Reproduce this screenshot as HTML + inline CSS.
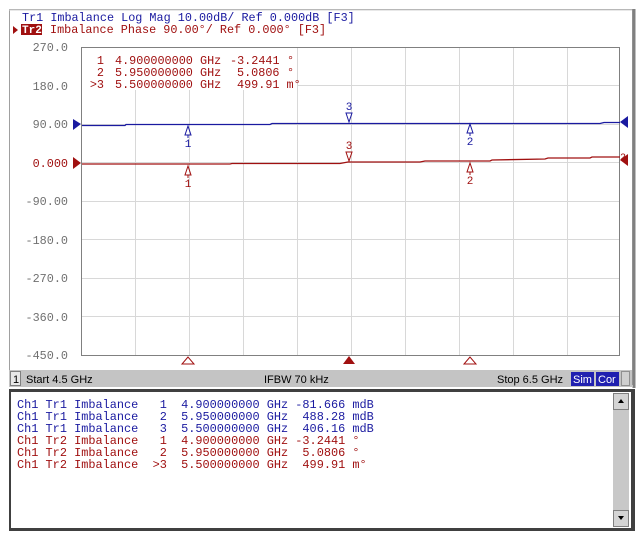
<!DOCTYPE html>
<html><head><meta charset="utf-8"><style>
html,body{margin:0;padding:0;background:#fff;width:644px;height:544px;overflow:hidden}
svg text{font-family:"Liberation Mono",monospace}
</style></head><body>
<svg width="644" height="544" viewBox="0 0 644 544" xmlns="http://www.w3.org/2000/svg">
<rect width="644" height="544" fill="#fff"/>
<rect x="9.5" y="9.5" width="623" height="375" fill="#fff" stroke="#a0a0a0"/>
<line x1="634" y1="9" x2="634" y2="388" stroke="#808080" stroke-width="3"/>
<line x1="9" y1="10" x2="632" y2="10" stroke="#d0d0d0"/>
<text x="22" y="21" font-size="11.8" fill="#1a1aa0">Tr1 Imbalance Log Mag 10.00dB/ Ref 0.000dB [F3]</text>
<polygon points="13,26 18,30 13,34" fill="#a01010"/>
<rect x="21" y="24" width="21" height="11" fill="#a01010"/>
<text x="22" y="33" font-size="11" font-weight="bold" fill="#fff">Tr2</text>
<text x="50" y="33" font-size="11.8" fill="#a01010">Imbalance Phase 90.00°/ Ref 0.000° [F3]</text>
<g stroke="#d8d8d8" stroke-width="1">
<line x1="135.5" y1="47" x2="135.5" y2="355"/><line x1="189.5" y1="47" x2="189.5" y2="355"/>
<line x1="243.5" y1="47" x2="243.5" y2="355"/><line x1="297.5" y1="47" x2="297.5" y2="355"/>
<line x1="351.5" y1="47" x2="351.5" y2="355"/><line x1="405.5" y1="47" x2="405.5" y2="355"/>
<line x1="459.5" y1="47" x2="459.5" y2="355"/><line x1="513.5" y1="47" x2="513.5" y2="355"/>
<line x1="567.5" y1="47" x2="567.5" y2="355"/>
<line x1="81" y1="85.5" x2="620" y2="85.5"/><line x1="81" y1="124.5" x2="620" y2="124.5"/>
<line x1="81" y1="162.5" x2="620" y2="162.5"/><line x1="81" y1="201.5" x2="620" y2="201.5"/>
<line x1="81" y1="239.5" x2="620" y2="239.5"/><line x1="81" y1="278.5" x2="620" y2="278.5"/>
<line x1="81" y1="316.5" x2="620" y2="316.5"/>
</g>
<rect x="81.5" y="47.5" width="538" height="308" fill="none" stroke="#808080"/>
<g font-size="11.8" fill="#707070" text-anchor="end">
<text x="68" y="51">270.0</text><text x="68" y="90">180.0</text>
<text x="68" y="128">90.00</text>
<text x="68" y="167" fill="#a01010">0.000</text>
<text x="68" y="205">-90.00</text><text x="68" y="244">-180.0</text>
<text x="68" y="282">-270.0</text><text x="68" y="321">-360.0</text>
<text x="68" y="359">-450.0</text>
</g>
<rect x="82" y="48" width="215" height="42" fill="#fff"/>
<g font-size="11.8" fill="#a01010">
<text x="104" y="64" text-anchor="end">1</text><text x="115" y="64">4.900000000</text><text x="200" y="64">GHz</text><text x="230" y="64">-3.2441</text><text x="287" y="64">°</text>
<text x="104" y="76" text-anchor="end">2</text><text x="115" y="76">5.950000000</text><text x="200" y="76">GHz</text><text x="237" y="76">5.0806</text><text x="287" y="76">°</text>
<text x="104" y="88" text-anchor="end">&gt;3</text><text x="115" y="88">5.500000000</text><text x="200" y="88">GHz</text><text x="237" y="88">499.91 m°</text>
</g>
<polygon points="73,119 81,124 73,130" fill="#1a1aa0"/>
<polygon points="73,157 81,163 73,169" fill="#a01010"/>
<polygon points="628,116 620,122 628,128" fill="#1a1aa0"/>
<polygon points="628,154 620,160 628,166" fill="#a01010"/>
<text x="620" y="160" font-size="10" fill="#a01010">2</text>
<polyline points="82,125.5 125,125.5 126,124.5 270,124.5 272,123.5 600,123.5 604,122.5 620,122.5" fill="none" stroke="#1a1aa0" stroke-width="1.3"/>
<polyline points="82,164 230,164 232,163.5 340,163.5 348,162 420,162 425,161 490,161 492,160 545,159 548,158 590,158 592,157 620,157" fill="none" stroke="#a01010" stroke-width="1.3"/>
<g fill="none" stroke="#1a1aa0" stroke-width="1">
<polygon points="188,126 185,135 191,135"/><line x1="188" y1="135" x2="188" y2="138"/>
<polygon points="470,124 467,133 473,133"/><line x1="470" y1="133" x2="470" y2="136"/>
<polygon points="349,122 346,113 352,113"/>
</g>
<g fill="#1a1aa0" font-size="11" text-anchor="middle">
<text x="188" y="147">1</text><text x="470" y="145">2</text><text x="349" y="110">3</text>
</g>
<g fill="none" stroke="#a01010" stroke-width="1">
<polygon points="188,166 185,175 191,175"/><line x1="188" y1="175" x2="188" y2="178"/>
<polygon points="470,163 467,172 473,172"/><line x1="470" y1="172" x2="470" y2="175"/>
<polygon points="349,161 346,152 352,152"/>
</g>
<g fill="#a01010" font-size="11" text-anchor="middle">
<text x="188" y="187">1</text><text x="470" y="184">2</text><text x="349" y="149">3</text>
</g>
<polygon points="188,357 182,364 194,364" fill="none" stroke="#a01010"/>
<polygon points="470,357 464,364 476,364" fill="none" stroke="#a01010"/>
<polygon points="349,356 343,364 355,364" fill="#a01010"/>
<rect x="9" y="370" width="623" height="17" fill="#c4c4c4"/>
<rect x="10.5" y="371.5" width="10" height="14" fill="#e8e8e8" stroke="#808080"/>
<g font-size="11" fill="#000">
<text x="13" y="383" style="font-family:'Liberation Sans'">1</text>
<text x="26" y="383" style="font-family:'Liberation Sans'">Start 4.5 GHz</text>
<text x="264" y="383" style="font-family:'Liberation Sans'">IFBW 70 kHz</text>
<text x="497" y="383" style="font-family:'Liberation Sans'">Stop 6.5 GHz</text>
</g>
<rect x="571" y="372" width="23" height="14" fill="#2020b0"/>
<rect x="596" y="372" width="23" height="14" fill="#2020b0"/>
<text x="573" y="383" font-size="11" fill="#fff" style="font-family:'Liberation Sans'">Sim</text>
<text x="598" y="383" font-size="11" fill="#fff" style="font-family:'Liberation Sans'">Cor</text>
<rect x="621.5" y="371.5" width="8" height="14" fill="#d0d0d0" stroke="#909090"/>
<rect x="9" y="389" width="626" height="142" fill="#404040"/>
<rect x="11" y="392" width="620" height="136" fill="#fff"/>
<rect x="613" y="393" width="16" height="134" fill="#c8c8c8"/>
<rect x="613.5" y="393.5" width="15" height="16" fill="#d4d4d4" stroke="#808080"/>
<rect x="613.5" y="510.5" width="15" height="16" fill="#d4d4d4" stroke="#808080"/>
<polygon points="621,399 618,403 624,403" fill="#000"/>
<polygon points="621,520 618,516 624,516" fill="#000"/>
<g font-size="11.9">
<text x="17" y="408" fill="#1a1aa0" xml:space="preserve">Ch1 Tr1 Imbalance   1  4.900000000 GHz -81.666 mdB</text>
<text x="17" y="420" fill="#1a1aa0" xml:space="preserve">Ch1 Tr1 Imbalance   2  5.950000000 GHz  488.28 mdB</text>
<text x="17" y="432" fill="#1a1aa0" xml:space="preserve">Ch1 Tr1 Imbalance   3  5.500000000 GHz  406.16 mdB</text>
<text x="17" y="444" fill="#a01010" xml:space="preserve">Ch1 Tr2 Imbalance   1  4.900000000 GHz -3.2441 °</text>
<text x="17" y="456" fill="#a01010" xml:space="preserve">Ch1 Tr2 Imbalance   2  5.950000000 GHz  5.0806 °</text>
<text x="17" y="468" fill="#a01010" xml:space="preserve">Ch1 Tr2 Imbalance  &gt;3  5.500000000 GHz  499.91 m°</text>
</g>
</svg>
</body></html>
